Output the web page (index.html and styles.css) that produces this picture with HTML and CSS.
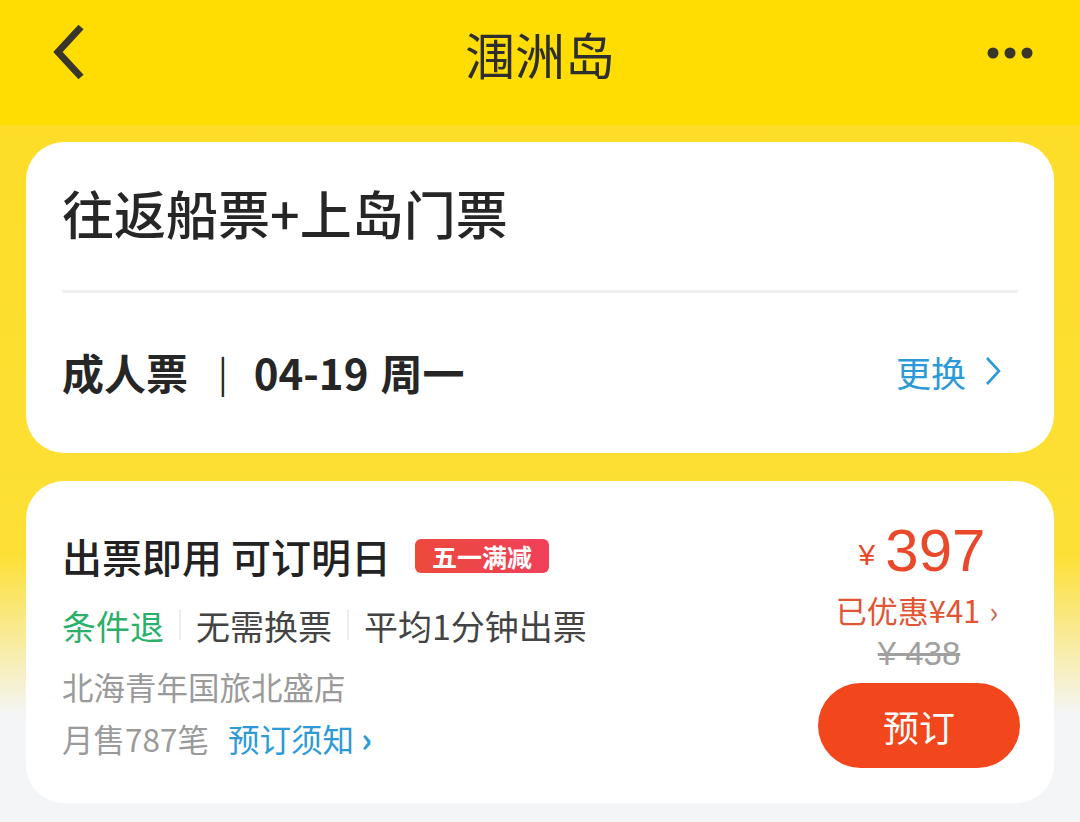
FILE: index.html
```html
<!DOCTYPE html>
<html lang="zh-CN">
<head>
    <meta charset="UTF-8">
    <meta name="viewport" content="width=device-width, initial-scale=1.0">
    <title>涠洲岛</title>
    <link rel="stylesheet" href="styles.css">
</head>
<body>

    <!-- Barra superior -->
    <div class="topbar">
        <svg class="back" width="40" height="60" viewBox="0 0 40 60">
            <path d="M31 4 L8 29 L31 54" fill="none" stroke="#38352a" stroke-width="7" stroke-linejoin="miter"/>
        </svg>
        <div class="topbar-title">涠洲岛</div>
        <svg class="more" width="48" height="14" viewBox="0 0 48 14">
            <circle cx="7" cy="7" r="5.5" fill="#38352a"/>
            <circle cx="24" cy="7" r="5.5" fill="#38352a"/>
            <circle cx="41" cy="7" r="5.5" fill="#38352a"/>
        </svg>
    </div>

    <div class="page">

        <!-- Producto y fecha -->
        <div class="card product">
            <div class="product-name">往返船票+上岛门票</div>
            <div class="product-row">
                <div class="ticket-info">
                    <span>成人票</span>
                    <span class="bar">|</span>
                    <span class="date">04-19</span>
                    <span class="week">周一</span>
                </div>
                <div class="change">
                    更换
                    <svg width="18" height="32" viewBox="0 0 18 32">
                        <path d="M3 3 L15 16 L3 29" fill="none" stroke="#2b9ad6" stroke-width="2.6"/>
                    </svg>
                </div>
            </div>
        </div>

        <!-- Oferta -->
        <div class="card offer">
            <div class="offer-left">
                <div class="offer-title">
                    出票即用 可订明日
                    <span class="badge">五一满减</span>
                </div>
                <div class="offer-tags">
                    <span class="tag green">条件退</span>
                    <span class="sep"></span>
                    <span class="tag">无需换票</span>
                    <span class="sep"></span>
                    <span class="tag">平均1分钟出票</span>
                </div>
                <div class="offer-shop">北海青年国旅北盛店</div>
                <div class="offer-sales">
                    月售787笔
                    <span class="notice">预订须知 <b>›</b></span>
                </div>
            </div>
            <div class="offer-right">
                <div class="price"><span class="yen">¥</span>397</div>
                <div class="discount">已优惠¥41 <span class="arrow">›</span></div>
                <div class="old-price">¥ 438</div>
                <button class="book">预订</button>
            </div>
        </div>

    </div>

</body>
</html>
```

FILE: styles.css
```css
body {
    margin: 0;
    font-family: "Noto Sans CJK SC", "Noto Sans", sans-serif;
    background-color: #f4f5f7;
    color: #222;
}
.topbar {
    height: 125px;
    background-color: #ffdd03;
    display: grid;
    grid-template-columns: 1fr auto 1fr;
    align-items: center;
    padding: 0 46px 0 50px;
    box-sizing: border-box;
}
.back {
    margin-top: -20px;
}
.topbar-title {
    font-size: 50px;
    color: #2e2e2e;
    margin-top: -20px;
    margin-left: -4px;
}
.more {
    margin-top: -20px;
    justify-self: end;
}
.page {
    padding: 17px 26px 20px;
    background: linear-gradient(#fddd28 0px, #fde036 430px, #f4f5f7 590px);
    height: 697px;
    box-sizing: border-box;
}
.card {
    background-color: #fff;
    border-radius: 38px;
}
.product {
    height: 311px;
    padding: 0 36px;
    display: flex;
    flex-direction: column;
}
.product-name {
    height: 151px;
    border-bottom: 3px solid #f0f0f0;
    box-sizing: border-box;
    font-size: 52px;
    font-weight: 500;
    color: #262626;
    display: flex;
    align-items: center;
    padding-bottom: 8px;
}
.product-row {
    flex: 1;
    display: flex;
    align-items: center;
    justify-content: space-between;
    padding-bottom: 4px;
}
.ticket-info {
    font-size: 42px;
    font-weight: 700;
    color: #262626;
    display: flex;
    align-items: center;
}
.ticket-info .bar {
    font-weight: 400;
    font-size: 36px;
    margin: 0 26px 0 30px;
}
.ticket-info .week {
    margin-left: 12px;
}
.change {
    font-size: 35px;
    color: #2b9ad6;
    display: flex;
    align-items: center;
    gap: 18px;
    margin-right: 16px;
}
.offer {
    margin-top: 28px;
    height: 322px;
    box-sizing: border-box;
    padding: 50px 34px 0 36px;
    display: flex;
    justify-content: space-between;
}
.offer-title {
    height: 50px;
    font-size: 40px;
    font-weight: 500;
    color: #222;
    display: flex;
    align-items: center;
}
.badge {
    margin-left: 24px;
    background: linear-gradient(90deg, #ec4a3c, #f0405a);
    color: #fff;
    font-size: 25px;
    font-weight: 700;
    height: 34px;
    line-height: 34px;
    padding: 0 17px;
    border-radius: 6px;
}
.offer-tags {
    margin-top: 19px;
    height: 50px;
    display: flex;
    align-items: center;
    font-size: 34px;
    color: #444;
}
.tag.green {
    color: #2bb06a;
}
.sep {
    width: 2px;
    height: 30px;
    background-color: #ececec;
    margin: 0 15px;
}
.offer-shop {
    margin-top: 13px;
    height: 46px;
    line-height: 46px;
    font-size: 31.5px;
    color: #9a9a9a;
}
.offer-sales {
    margin-top: 6px;
    height: 46px;
    line-height: 46px;
    font-size: 31.5px;
    color: #9a9a9a;
}
.notice {
    color: #2b9ad6;
    margin-left: 12px;
}
.notice b {
    font-size: 34px;
}
.offer-right {
    width: 202px;
    margin-top: -10px;
    display: flex;
    flex-direction: column;
    align-items: center;
}
.price {
    height: 60px;
    line-height: 60px;
    font-size: 60px;
    color: #e9492a;
    font-family: "Liberation Sans", "Noto Sans", sans-serif;
    margin-left: 6px;
}
.price .yen {
    font-size: 30px;
    margin-right: 10px;
    vertical-align: 6px;
}
.discount {
    margin-top: 9px;
    height: 40px;
    line-height: 40px;
    font-size: 31px;
    color: #e05533;
    margin-left: -4px;
}
.discount .arrow {
    color: #c66a50;
    font-size: 30px;
    margin-left: 2px;
}
.old-price {
    margin-top: 6px;
    height: 36px;
    line-height: 36px;
    font-size: 33px;
    color: #a0a0a0;
    text-decoration: line-through;
    font-family: "Liberation Sans", "Noto Sans", sans-serif;
}
.book {
    margin-top: 11px;
    width: 202px;
    height: 85px;
    border: none;
    border-radius: 43px;
    background-color: #f2461d;
    color: #fff;
    font-family: "Noto Sans CJK SC", sans-serif;
    font-size: 36px;
}
```
